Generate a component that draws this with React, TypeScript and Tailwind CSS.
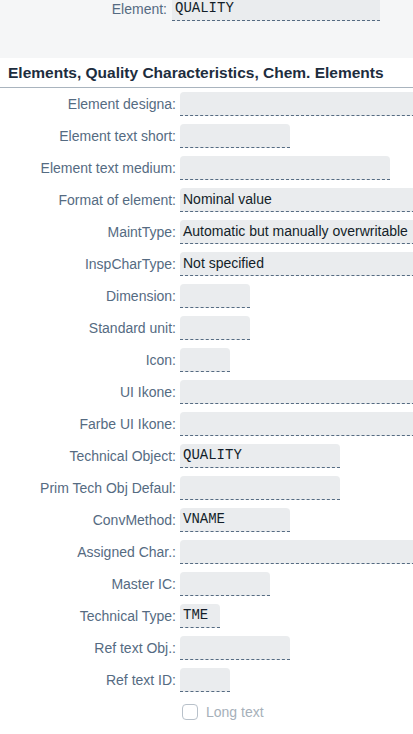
const rows: { label: string; w: string; value?: string; mono?: boolean }[] = [
  { label: 'Element designa:', w: 'w-[240px]' },
  { label: 'Element text short:', w: 'w-[110px]' },
  { label: 'Element text medium:', w: 'w-[210px]' },
  { label: 'Format of element:', w: 'w-[240px]', value: 'Nominal value' },
  { label: 'MaintType:', w: 'w-[240px]', value: 'Automatic but manually overwritable' },
  { label: 'InspCharType:', w: 'w-[240px]', value: 'Not specified' },
  { label: 'Dimension:', w: 'w-[70px]' },
  { label: 'Standard unit:', w: 'w-[70px]' },
  { label: 'Icon:', w: 'w-[50px]' },
  { label: 'UI Ikone:', w: 'w-[240px]' },
  { label: 'Farbe UI Ikone:', w: 'w-[240px]' },
  { label: 'Technical Object:', w: 'w-[160px]', value: 'QUALITY', mono: true },
  { label: 'Prim Tech Obj Defaul:', w: 'w-[160px]' },
  { label: 'ConvMethod:', w: 'w-[110px]', value: 'VNAME', mono: true },
  { label: 'Assigned Char.:', w: 'w-[240px]' },
  { label: 'Master IC:', w: 'w-[90px]' },
  { label: 'Technical Type:', w: 'w-[40px]', value: 'TME', mono: true },
  { label: 'Ref text Obj.:', w: 'w-[110px]' },
  { label: 'Ref text ID:', w: 'w-[50px]' },
];

function Field({ w, value, mono }: { w: string; value?: string; mono?: boolean }) {
  return (
    <div
      className={`${w} shrink-0 h-6 rounded-t-[4px] bg-[#eaecee] border-b border-dashed border-[#556b82] px-[3px] flex items-center text-[14px] text-[#131e29] whitespace-nowrap overflow-hidden ${
        mono ? "font-['Liberation_Mono',monospace]" : ''
      }`}
    >
      {value}
    </div>
  );
}

export default function App() {
  return (
    <div className="w-[413px] h-[734px] overflow-hidden bg-white font-['Liberation_Sans',sans-serif]">
      {/* Header */}
      <div className="h-[58px] bg-[#f5f6f7] flow-root">
        <div className="flex items-center -mt-[3px] gap-[5px]">
          <div className="w-[167px] text-right text-[14px] text-[#556b82]">Element:</div>
          <Field w="w-[208px]" value="QUALITY" mono />
        </div>
      </div>

      {/* Section title */}
      <div className="h-[30px] border-b border-[#a9b4be] px-2 flex items-center">
        <h2 className="text-[15.5px] font-bold text-[#1d2d3e] whitespace-nowrap">
          Elements, Quality Characteristics, Chem. Elements
        </h2>
      </div>

      {/* Form */}
      <div className="flex flex-col gap-2 pt-1">
        {rows.map((r) => (
          <div key={r.label} className="flex items-center gap-1">
            <div className="w-[176px] shrink-0 text-right text-[14px] text-[#556b82] whitespace-nowrap">
              {r.label}
            </div>
            <Field w={r.w} value={r.value} mono={r.mono} />
          </div>
        ))}
        <div className="flex items-center gap-2 pl-[182px] h-6">
          <div className="w-[16px] h-[16px] rounded-[4px] border border-[#b8c1ca] bg-white" />
          <span className="text-[14px] text-[#a6b0ba]">Long text</span>
        </div>
      </div>
    </div>
  );
}
